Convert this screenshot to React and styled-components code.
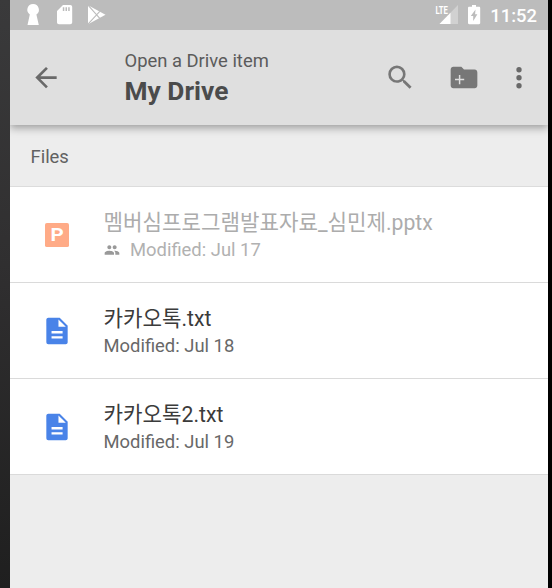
import React from 'react';
import styled, { createGlobalStyle } from 'styled-components';

const GlobalStyle = createGlobalStyle`
  * { box-sizing: border-box; }
  body { margin: 0; background: #000; }
`;

const Stage = styled.div`
  width: 552px;
  height: 588px;
  padding: 0 4px 0 10px;
  background: linear-gradient(to right, transparent 10px, #000 10px),
    linear-gradient(#3a3a3b, #302f30 45%, #1f1f1f);
  overflow: hidden;
  font-family: Roboto, 'Noto Sans CJK KR', sans-serif;
`;

const Screen = styled.div`
  width: 538px;
  height: 588px;
  background: #ededed;
`;

const StatusBar = styled.div`
  display: flex;
  align-items: center;
  justify-content: space-between;
  height: 30px;
  padding: 0 11px 0 12px;
  background: #bcbcbc;
`;

const StatusGroup = styled.div`
  display: flex;
  align-items: center;
  height: 30px;
`;

const Clock = styled.time`
  margin-left: 5px;
  color: #fff;
  font-size: 18.4px;
  font-weight: 500;
  line-height: 30px;
  padding-top: 1px;
`;

const Toolbar = styled.header`
  position: relative;
  display: flex;
  align-items: center;
  height: 95px;
  padding: 0 13px 0 20px;
  background: #dfdfdf;
  color: #696969;
  box-shadow: 0 3px 8px rgba(0, 0, 0, 0.34);
  clip-path: inset(0 0 -16px 0);
`;

const Heading = styled.div`
  flex: 1;
  margin-left: 62.5px;
`;

const Subtitle = styled.div`
  height: 24px;
  padding-top: 1px;
  color: #5b5b5b;
  font-size: 18.4px;
  line-height: 24px;
  white-space: nowrap;
`;

const Title = styled.h1`
  margin: 3px 0 0;
  color: #4b4b4b;
  font-size: 26.3px;
  font-weight: 700;
  line-height: 32px;
  white-space: nowrap;
`;

const Actions = styled.div`
  display: flex;
  align-items: center;
  gap: 31.5px;
`;

const IconButton = styled.button`
  display: flex;
  width: 32px;
  height: 32px;
  padding: 0;
  border: 0;
  background: none;
  color: inherit;
  margin-left: ${({ $shift }) => $shift || 0}px;
`;

const SectionLabel = styled.div`
  height: 62px;
  padding-left: 20.5px;
  border-bottom: 1px solid #dcdcdc;
  color: #616161;
  font-size: 18.4px;
  line-height: 63px;
`;

const FileRow = styled.div`
  display: flex;
  align-items: center;
  height: 96px;
  padding-left: 30.5px;
  background: #fff;
  border-bottom: 1px solid #dadada;
`;

const FileText = styled.div`
  padding-top: 3px;
  margin-left: 31px;
`;

const FileName = styled.div`
  height: 28px;
  color: ${({ $disabled }) => ($disabled ? '#acacac' : '#3b3b3b')};
  font-size: 21.2px;
  line-height: 28px;
  white-space: nowrap;
`;

const FileMeta = styled.div`
  display: flex;
  align-items: center;
  gap: 10.5px;
  height: 26px;
  color: ${({ $disabled }) => ($disabled ? '#b1b1b1' : '#686868')};
  font-size: 18.4px;
  line-height: 26px;
  white-space: nowrap;
`;

const Svg = styled.svg`
  display: block;
  flex: none;
`;

const NetworkLabel = styled.text`
  fill: #fff;
  font-family: Roboto, sans-serif;
  font-size: 11.5px;
  font-weight: 700;
`;

const BadgeLetter = styled.text`
  fill: #fff;
  font-family: Roboto, sans-serif;
  font-size: 13.6px;
  font-weight: 700;
`;

const Icon = ({ size = 32, children, ...rest }) => (
  <Svg width={size} height={size} viewBox="0 0 24 24" fill="currentColor" {...rest}>{children}</Svg>
);

const NotificationIcons = () => (
  <Svg width="90" height="30" viewBox="0 0 90 30" fill="#fff">
    <path d="M11 4a5.7 5.7 0 0 0-3.2 10.4L5.5 25h11.3l-2.4-10.6A5.7 5.7 0 0 0 11 4z" />
    <path fillRule="evenodd" d="M41 5h7.200c1.200 0 2 .8 2 2v15.200c0 1.200-.8 2-2 2H37c-1.200 0-2-.8-2-2V11zM40.800 7.300v3.800h1.500v-3.800zm2.700 0v3.800h1.500v-3.800zm2.700 0v3.800h1.500v-3.800z" />
    <path d="M66 5.200 L83.500 14.800 L66 24.200z" />
    <path d="M66 5.200 L77.800 18.300 M66 24.200 L77.800 11.300" stroke="#bcbcbc" strokeWidth="1.100" />
  </Svg>
);

const SystemIcons = () => (
  <Svg width="50" height="30" viewBox="0 0 50 30">
    <path d="M23 5v19H4.500z" fill="#d1d1d1" />
    <path d="M4.500 24 L15.500 12.700 V24z" fill="#fff" />
    <path d="M0 4h13.500v10.500H0z" fill="#bcbcbc" />
    <NetworkLabel x="0.400" y="13.800" textLength="12.400" lengthAdjust="spacingAndGlyphs">LTE</NetworkLabel>
    <path fillRule="evenodd" d="M37 5h4v1.800h3c.7 0 1.200.5 1.200 1.200v15c0 .7-.5 1.200-1.200 1.200H34.200c-.7 0-1.200-.5-1.200-1.200V8c0-.7.5-1.200 1.200-1.200H37zM40.500 9.500l-4.700 6.500H38.200v5l4.200-6.700h-2.300z" fill="#fff" />
  </Svg>
);

const BackIcon = () => (
  <Icon><path d="M20 10.700H7.830l5.590-5.590L12 3.700l-8 8 8 8 1.410-1.410L7.830 12.700H20v-2z" /></Icon>
);

const SearchIcon = () => (
  <Icon><path fill="#777" transform="translate(.2 -.4)" d="M15.500 14h-.79l-.28-.27A6.471 6.471 0 0 0 16 9.500 6.500 6.500 0 1 0 9.500 16c1.610 0 3.090-.59 4.230-1.570l.27.28v.79l5 4.990L20.490 19l-4.990-5zm-6 0C7.010 14 5 11.990 5 9.500S7.010 5 9.500 5 14 7.010 14 9.500 11.990 14 9.500 14z" /></Icon>
);

const NewFolderIcon = () => (
  <Icon>
    <g transform="translate(0 -.4)">
      <path fill="#777" d="M20 6h-8l-2-2H4c-1.110 0-2 .89-2 2v12c0 1.110.89 2 2 2h16c1.110 0 2-.89 2-2V8c0-1.110-.89-2-2-2z" />
      <path d="M8.700 10.100v6.900M5.250 13.550h6.900" stroke="#dfdfdf" strokeWidth="1.100" />
    </g>
  </Icon>
);

const MoreIcon = () => (
  <Icon><circle cx="12" cy="5.800" r="2" /><circle cx="12" cy="11.800" r="2" /><circle cx="12" cy="17.800" r="2" /></Icon>
);

const PeopleIcon = () => (
  <Icon size={16} fill="#999"><path d="M16 11c1.660 0 2.990-1.340 2.990-3S17.660 5 16 5s-3 1.340-3 3 1.340 3 3 3zm-8 0c1.660 0 2.990-1.340 2.990-3S9.660 5 8 5 5 6.340 5 8s1.340 3 3 3zm0 2c-2.330 0-7 1.170-7 3.500V19h14v-2.500c0-2.330-4.670-3.500-7-3.500zm8 0c-.29 0-.62.020-.97.050 1.160.84 1.970 1.970 1.970 3.450V19h6v-2.500c0-2.330-4.670-3.500-7-3.500z" /></Icon>
);

const PresentationIcon = () => (
  <Icon>
    <rect x="3" y="3" width="18" height="18" rx="1.400" fill="#ffab87" />
    <BadgeLetter x="7.100" y="16.800" textLength="9.900" lengthAdjust="spacingAndGlyphs">P</BadgeLetter>
  </Icon>
);

const DocumentIcon = () => (
  <Icon>
    <path fill="#4983e8" d="M5.500 2H14l6 6v12.500c0 .83-.67 1.500-1.500 1.500h-13A1.500 1.500 0 0 1 4 20.500v-17C4 2.670 4.670 2 5.500 2z" />
    <path fill="#fff" d="M13.100 3.300v5.600h5.500zM7.900 12h8.300v1.800H7.900zM7.900 15.900h8.300v1.800H7.900z" />
  </Icon>
);

const files = [
  { name: '멤버심프로그램발표자료_심민제.pptx', modified: 'Jul 17', kind: 'presentation', shared: true, disabled: true },
  { name: '카카오톡.txt', modified: 'Jul 18', kind: 'document' },
  { name: '카카오톡2.txt', modified: 'Jul 19', kind: 'document' },
];

export default function App() {
  return (
    <Stage>
      <GlobalStyle />
      <Screen>
        <StatusBar>
          <StatusGroup><NotificationIcons /></StatusGroup>
          <StatusGroup><SystemIcons /><Clock>11:52</Clock></StatusGroup>
        </StatusBar>
        <Toolbar>
          <IconButton aria-label="Back"><BackIcon /></IconButton>
          <Heading>
            <Subtitle>Open a Drive item</Subtitle>
            <Title>My Drive</Title>
          </Heading>
          <Actions>
            <IconButton aria-label="Search"><SearchIcon /></IconButton>
            <IconButton aria-label="New folder"><NewFolderIcon /></IconButton>
            <IconButton aria-label="More options" $shift={-8}><MoreIcon /></IconButton>
          </Actions>
        </Toolbar>
        <SectionLabel>Files</SectionLabel>
        {files.map((file) => (
          <FileRow key={file.name}>
            {file.kind === 'presentation' ? <PresentationIcon /> : <DocumentIcon />}
            <FileText>
              <FileName lang="ko" $disabled={file.disabled}>{file.name}</FileName>
              <FileMeta $disabled={file.disabled}>
                {file.shared && <PeopleIcon />}
                <span>Modified: {file.modified}</span>
              </FileMeta>
            </FileText>
          </FileRow>
        ))}
      </Screen>
    </Stage>
  );
}
